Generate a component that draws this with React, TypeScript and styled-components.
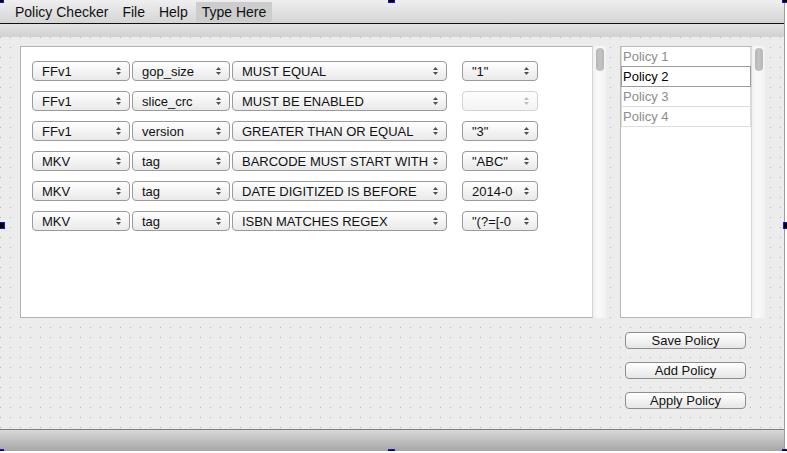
import React from "react";
import styled, { createGlobalStyle } from "styled-components";

const Global = createGlobalStyle`
  html, body { margin: 0; padding: 0; background: #ffffff; }
  body { font-family: "Liberation Sans", Arial, sans-serif; }
`;

const Frame = styled.div`
  position: relative;
  width: 785px;
  height: 451px;
  box-sizing: border-box;
  border-right: 1px solid #9c9c9c;
  display: flex;
  flex-direction: column;
  overflow: visible;
`;

const MenuBar = styled.div`
  height: 23px;
  border-bottom: 1px solid #111;
  background: linear-gradient(#efefef, #d5d5d5);
  display: flex;
  align-items: stretch;
  gap: 2px;
  padding-left: 9px;
`;

const MenuItem = styled.div<{ $active?: boolean }>`
  padding: 0 6px;
  display: flex;
  align-items: center;
  font-size: 14px;
  color: #111;
  margin: ${(p) => (p.$active ? "2px 0 1px" : "0")};
  background: ${(p) => (p.$active ? "#cdcdcd" : "transparent")};
`;

const ToolStrip = styled.div`
  height: 13px;
  background: linear-gradient(#e4e4e4, #d1d1d1);
`;

const Canvas = styled.div`
  flex: 1;
  background-color: #ececec;
  background-image: linear-gradient(90deg, #ececec 9px, transparent 9px),
    linear-gradient(#ececec 9px, #b4b4b4 9px);
  background-size: 10px 10px;
  background-position: 1px 1px;
  display: flex;
  align-items: flex-start;
  padding: 9px 0 0 20px;
  gap: 14px;
`;

const TablePanel = styled.div`
  display: flex;
  height: 272px;
`;

const TableBody = styled.div`
  width: 573px;
  box-sizing: border-box;
  background: #fff;
  border: 1px solid #b2b2b2;
  border-right-color: #d4d4d4;
  padding: 14px 0 0 11px;
  display: flex;
  flex-direction: column;
  gap: 10px;
`;

const ScrollTrack = styled.div`
  width: 13px;
  box-sizing: border-box;
  background: linear-gradient(90deg, #f0f0f0, #fafafa 40%, #f2f2f2);
  padding: 2px 0 0 3px;
`;

const Thumb = styled.div`
  width: 8px;
  height: 23px;
  border-radius: 4px;
  background: linear-gradient(90deg, #b6b6b6, #c4c4c4, #b6b6b6);
`;

const Row = styled.div`
  display: flex;
  gap: 2px;
  height: 20px;
`;

const Combo = styled.div<{ $w: number; $gap?: number; $disabled?: boolean }>`
  width: ${(p) => p.$w}px;
  margin-left: ${(p) => p.$gap ?? 0}px;
  box-sizing: border-box;
  height: 20px;
  border: 1px solid ${(p) => (p.$disabled ? "#d2d2d2" : "#9a9a9a")};
  border-radius: 4px;
  background: ${(p) =>
    p.$disabled
      ? "linear-gradient(#fdfdfd, #f3f3f3)"
      : "linear-gradient(#ffffff, #f4f4f4 50%, #e9e9e9)"};
  display: flex;
  align-items: center;
  padding: 0 7px 0 9px;
  font-size: 13px;
  color: #111;
`;

const ComboText = styled.span`
  flex: 1;
  white-space: nowrap;
`;

const Arrows = ({ disabled }: { disabled?: boolean }) => (
  <svg width="7" height="10" viewBox="0 0 7 10" style={{ flexShrink: 0 }}>
    <polygon points="1,4 3.5,1 6,4" fill={disabled ? "#bdbdbd" : "#505050"} />
    <polygon points="1,6 3.5,9 6,6" fill={disabled ? "#bdbdbd" : "#505050"} />
  </svg>
);

const RightColumn = styled.div`
  display: flex;
  flex-direction: column;
`;

const ListPanel = styled.div`
  display: flex;
  height: 272px;
`;

const ListBody = styled.div`
  width: 132px;
  box-sizing: border-box;
  background: #fff;
  border: 1px solid #b8b8b8;
  border-right-color: #d8d8d8;
  display: flex;
  flex-direction: column;
`;

const ListItem = styled.div<{ $current?: boolean }>`
  position: relative;
  z-index: ${(p) => (p.$current ? 1 : 0)};
  height: 21px;
  box-sizing: border-box;
  border: 1px solid ${(p) => (p.$current ? "#9c9c9c" : "#dcdcdc")};
  margin-top: -1px;
  &:first-child { margin-top: 0; height: 20px; border-top: none; }
  padding-left: 1px;
  display: flex;
  align-items: center;
  font-size: 13px;
  color: ${(p) => (p.$current ? "#000" : "#8c8c8c")};
`;

const Buttons = styled.div`
  display: flex;
  flex-direction: column;
  gap: 13px;
  padding: 14px 0 0 5px;
`;

const Button = styled.div`
  width: 121px;
  height: 17px;
  box-sizing: border-box;
  border: 1px solid #8e8e8e;
  border-radius: 4px;
  background: linear-gradient(#ffffff, #f3f3f3 50%, #e6e6e6);
  display: flex;
  align-items: center;
  justify-content: center;
  font-size: 13px;
  color: #111;
`;

const StatusBar = styled.div`
  height: 22px;
  box-sizing: border-box;
  border-top: 1px solid #7c7c7c;
  background: linear-gradient(#d8d8d8, #a6a6a6);
`;

const Handle = styled.div`
  position: absolute;
  width: 5px;
  height: 5px;
  background: #000;
  border: 1px solid #1010e0;
`;

type Rule = { a: string; b: string; c: string; d: string | null };

const rules: Rule[] = [
  { a: "FFv1", b: "gop_size", c: "MUST EQUAL", d: "\"1\"" },
  { a: "FFv1", b: "slice_crc", c: "MUST BE ENABLED", d: null },
  { a: "FFv1", b: "version", c: "GREATER THAN OR EQUAL", d: "\"3\"" },
  { a: "MKV", b: "tag", c: "BARCODE MUST START WITH", d: "\"ABC\"" },
  { a: "MKV", b: "tag", c: "DATE DIGITIZED IS BEFORE", d: "2014-0" },
  { a: "MKV", b: "tag", c: "ISBN MATCHES REGEX", d: "\"(?=[-0" },
];

const policies = ["Policy 1", "Policy 2", "Policy 3", "Policy 4"];

const handlePos = [
  { left: -3, top: -4 },
  { left: 388, top: -4 },
  { left: 782, top: -4 },
  { left: -2, top: 222 },
  { left: 783, top: 222 },
  { left: -3, top: 449 },
  { left: 388, top: 449 },
  { left: 782, top: 449 },
];

export default function App() {
  return (
    <>
      <Global />
      <Frame>
        <MenuBar>
          <MenuItem>Policy Checker</MenuItem>
          <MenuItem>File</MenuItem>
          <MenuItem>Help</MenuItem>
          <MenuItem $active>Type Here</MenuItem>
        </MenuBar>
        <ToolStrip />
        <Canvas>
          <TablePanel>
            <TableBody>
              {rules.map((r, i) => (
                <Row key={i}>
                  <Combo $w={98}>
                    <ComboText>{r.a}</ComboText>
                    <Arrows />
                  </Combo>
                  <Combo $w={98}>
                    <ComboText>{r.b}</ComboText>
                    <Arrows />
                  </Combo>
                  <Combo $w={215}>
                    <ComboText>{r.c}</ComboText>
                    <Arrows />
                  </Combo>
                  <Combo $w={76} $gap={13} $disabled={r.d === null}>
                    <ComboText>{r.d ?? ""}</ComboText>
                    <Arrows disabled={r.d === null} />
                  </Combo>
                </Row>
              ))}
            </TableBody>
            <ScrollTrack>
              <Thumb />
            </ScrollTrack>
          </TablePanel>
          <RightColumn>
            <ListPanel>
              <ListBody>
                {policies.map((p, i) => (
                  <ListItem key={p} $current={i === 1}>
                    {p}
                  </ListItem>
                ))}
              </ListBody>
              <ScrollTrack>
                <Thumb />
              </ScrollTrack>
            </ListPanel>
            <Buttons>
              <Button>Save Policy</Button>
              <Button>Add Policy</Button>
              <Button>Apply Policy</Button>
            </Buttons>
          </RightColumn>
        </Canvas>
        <StatusBar />
        {handlePos.map((h, i) => (
          <Handle key={i} style={{ left: h.left, top: h.top }} />
        ))}
      </Frame>
    </>
  );
}
